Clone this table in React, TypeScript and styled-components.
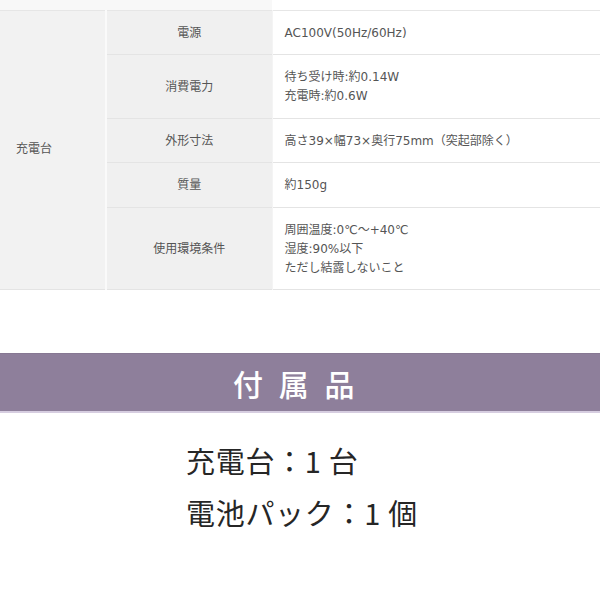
import React from "react";
import styled, { createGlobalStyle } from "styled-components";

const Global = createGlobalStyle`
  html, body { margin: 0; padding: 0; background: #fff; }
  body { font-family: "Noto Sans CJK JP", "Noto Sans", sans-serif; }
`;

const Page = styled.div`
  width: 600px;
  display: flex;
  flex-direction: column;
`;

const Table = styled.table`
  width: 600px;
  border-collapse: collapse;
  table-layout: fixed;
  font-family: "DejaVu Sans", "Noto Sans CJK JP", sans-serif;
  font-size: 12px;
  line-height: 19px;
  color: #555;
`;

const StubRow = styled.tr`
  height: 10px;
  border-bottom: 1px solid #e6e6e6;
`;

const StubCell = styled.td<{ $gray?: boolean }>`
  padding: 0;
  background: ${(p) => (p.$gray ? "#f8f8f8" : "#fff")};
`;

const Row = styled.tr`
  border-bottom: 1px solid #e4e4e4;
`;

const GroupCell = styled.td`
  background: #f2f2f2;
  padding: 0 16px;
  text-align: left;
  vertical-align: middle;
  border-right: 2px solid #fafafa;
  border-bottom: 1px solid #e4e4e4;
`;

const LabelCell = styled.th`
  background: #f0f0f0;
  font-weight: normal;
  text-align: center;
  vertical-align: middle;
  padding: 13px 8px 11.6px;
  border-right: 1px solid #f4f4f4;
`;

const ValueCell = styled.td`
  background: #fff;
  text-align: left;
  vertical-align: middle;
  padding: 13px 12px 11.6px;
`;

const Band = styled.div`
  margin-top: 63px;
  height: 57px;
  background: #8e7f9b;
  border-top: 1px solid #877893;
  border-bottom: 2px solid #d6cde0;
  display: flex;
  align-items: center;
  justify-content: center;
  color: #fff;
  font-size: 30px;
  font-weight: 500;
  letter-spacing: 4.5px;
  padding-right: 8px;
`;

const List = styled.div`
  margin-top: 21px;
  padding-left: 186px;
  display: flex;
  flex-direction: column;
  font-size: 29px;
  line-height: 52px;
  color: #262626;
  letter-spacing: 0.7px;
`;

const rows: { label: string; value: string[] }[] = [
  { label: "電源", value: ["AC100V(50Hz/60Hz)"] },
  { label: "消費電力", value: ["待ち受け時:約0.14W", "充電時:約0.6W"] },
  { label: "外形寸法", value: ["高さ39×幅73×奥行75mm（突起部除く）"] },
  { label: "質量", value: ["約150g"] },
  { label: "使用環境条件", value: ["周囲温度:0℃～+40℃", "湿度:90%以下", "ただし結露しないこと"] },
];

export default function App() {
  return (
    <Page>
      <Global />
      <Table>
        <colgroup>
          <col style={{ width: 106 }} />
          <col style={{ width: 166 }} />
          <col />
        </colgroup>
        <tbody>
          <StubRow>
            <StubCell $gray />
            <StubCell $gray />
            <StubCell />
          </StubRow>
          {rows.map((r, i) => (
            <Row key={r.label}>
              {i === 0 && <GroupCell rowSpan={rows.length}>充電台</GroupCell>}
              <LabelCell>{r.label}</LabelCell>
              <ValueCell>
                {r.value.map((v, j) => (
                  <div key={j}>{v}</div>
                ))}
              </ValueCell>
            </Row>
          ))}
        </tbody>
      </Table>
      <Band>付 属 品</Band>
      <List>
        <div>充電台：1 台</div>
        <div>電池パック：1 個</div>
      </List>
    </Page>
  );
}
